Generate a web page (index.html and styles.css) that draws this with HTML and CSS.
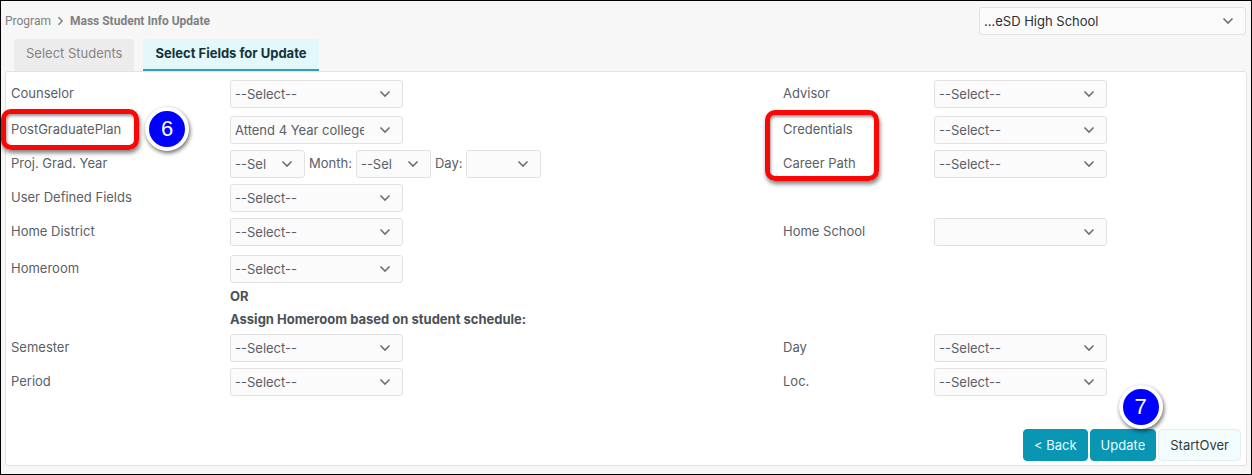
FILE: index.html
```html
<!DOCTYPE html>
<html lang="en">
<head>
<meta charset="utf-8">
<title>Mass Student Info Update</title>
<link rel="stylesheet" href="styles.css">
</head>
<body>
<svg class="sprite" aria-hidden="true">
  <symbol id="chevron" viewBox="0 0 12 8"><path d="M1.5 1.5 6 6l4.500-4.500" fill="none" stroke="currentColor" stroke-width="1.600"/></symbol>
</svg>
<div class="page">
  <header class="topbar">
    <nav class="crumbs" aria-label="Breadcrumb">
      <span>Program</span>
      <svg class="crumb-arrow" viewBox="0 0 8 12" aria-hidden="true"><path d="M1.500 1.500 6 6l-4.500 4.500" fill="none" stroke="currentColor" stroke-width="1.800"/></svg>
      <strong>Mass Student Info Update</strong>
    </nav>
    <span class="picker picker-school"><select aria-label="School"><option>...eSD High School</option></select><svg class="chevron"><use href="#chevron"/></svg></span>
  </header>
  <div class="tabs" role="tablist">
    <button class="tab" role="tab" aria-selected="false">Select Students</button>
    <button class="tab tab-active" role="tab" aria-selected="true">Select Fields for Update</button>
  </div>
  <form class="panel">
    <div class="row row-loose">
      <label for="counselor">Counselor</label>
      <span class="picker"><select id="counselor"><option>--Select--</option></select><svg class="chevron"><use href="#chevron"/></svg></span>
      <label for="advisor">Advisor</label>
      <span class="picker"><select id="advisor"><option>--Select--</option></select><svg class="chevron"><use href="#chevron"/></svg></span>
    </div>
    <div class="row">
      <div class="marked">
        <label for="plan">PostGraduatePlan</label>
        <span class="outline outline-plan"></span>
        <span class="step step-plan">6</span>
      </div>
      <span class="picker"><select id="plan"><option>Attend 4 Year college</option></select><svg class="chevron"><use href="#chevron"/></svg></span>
      <div class="marked">
        <label for="credentials">Credentials</label>
        <span class="outline outline-career"></span>
      </div>
      <span class="picker"><select id="credentials"><option>--Select--</option></select><svg class="chevron"><use href="#chevron"/></svg></span>
    </div>
    <div class="row">
      <label for="year">Proj. Grad. Year</label>
      <div class="dates">
        <span class="picker picker-small"><select id="year"><option>--Select--</option></select><svg class="chevron"><use href="#chevron"/></svg></span>
        <label for="month">Month:</label>
        <span class="picker picker-small"><select id="month"><option>--Select--</option></select><svg class="chevron"><use href="#chevron"/></svg></span>
        <label for="gradday">Day:</label>
        <span class="picker picker-small"><select id="gradday"><option></option></select><svg class="chevron"><use href="#chevron"/></svg></span>
      </div>
      <label for="career">Career Path</label>
      <span class="picker"><select id="career"><option>--Select--</option></select><svg class="chevron"><use href="#chevron"/></svg></span>
    </div>
    <div class="row">
      <label for="userfields">User Defined Fields</label>
      <span class="picker"><select id="userfields"><option>--Select--</option></select><svg class="chevron"><use href="#chevron"/></svg></span>
    </div>
    <div class="row row-section">
      <label for="district">Home District</label>
      <span class="picker"><select id="district"><option>--Select--</option></select><svg class="chevron"><use href="#chevron"/></svg></span>
      <label for="school">Home School</label>
      <span class="picker"><select id="school"><option></option></select><svg class="chevron"><use href="#chevron"/></svg></span>
    </div>
    <div class="row row-tight">
      <label for="homeroom">Homeroom</label>
      <span class="picker"><select id="homeroom"><option>--Select--</option></select><svg class="chevron"><use href="#chevron"/></svg></span>
    </div>
    <div class="row row-note"><strong>OR</strong></div>
    <div class="row row-note"><strong>Assign Homeroom based on student schedule:</strong></div>
    <div class="row row-after-note">
      <label for="semester">Semester</label>
      <span class="picker"><select id="semester"><option>--Select--</option></select><svg class="chevron"><use href="#chevron"/></svg></span>
      <label for="day">Day</label>
      <span class="picker"><select id="day"><option>--Select--</option></select><svg class="chevron"><use href="#chevron"/></svg></span>
    </div>
    <div class="row">
      <label for="period">Period</label>
      <span class="picker"><select id="period"><option>--Select--</option></select><svg class="chevron"><use href="#chevron"/></svg></span>
      <label for="loc">Loc.</label>
      <span class="picker"><select id="loc"><option>--Select--</option></select><svg class="chevron"><use href="#chevron"/></svg></span>
    </div>
    <div class="actions">
      <button type="button" class="btn">&lt; Back</button>
      <div class="marked">
        <button type="button" class="btn">Update</button>
        <span class="step step-update">7</span>
      </div>
      <button type="button" class="btn btn-light">StartOver</button>
    </div>
  </form>
</div>
</body>
</html>
```
FILE: styles.css
```css
* { box-sizing: border-box; }

body {
  margin: 0;
  font: 13px/26px Inter, "Liberation Sans", sans-serif;
  color: #5a6066;
}

button, select { font: inherit; }

.sprite { display: none; }

.page {
  display: flex;
  flex-direction: column;
  min-height: 100vh;
  padding: 6px 4px 8px;
  border: 1px solid #000;
  background: #f7f7f7;
}

.topbar {
  display: flex;
  justify-content: space-between;
  height: 32px;
}

.crumbs {
  display: flex;
  align-items: center;
  gap: 6px;
  height: 28px;
  font-family: Roboto, Inter, sans-serif;
  font-size: 12px;
  color: #808080;
}

.crumbs strong { font-weight: 700; }

.crumb-arrow { width: 7px; height: 10px; }

.picker {
  position: relative;
  display: block;
  width: 173px;
  height: 28px;
}

.picker select {
  appearance: none;
  display: block;
  width: 100%;
  height: 28px;
  padding: 0 38px 4px 4px;
  border: 1px solid #e2e2e2;
  border-radius: 3px;
  background: #fbfbfb;
  color: #5a6066;
}

.chevron {
  position: absolute;
  top: 10px;
  right: 12px;
  width: 12px;
  height: 8px;
  color: #6b7076;
  pointer-events: none;
}

.picker-school { width: 267px; margin-right: 1px; }
.picker-school select { color: #2b2f33; }

.picker-small { width: 75px; }

.tabs {
  display: flex;
  gap: 9px;
  padding-left: 9px;
}

.tab {
  height: 32px;
  padding: 0 12px 4px;
  border: 0;
  border-radius: 3px 3px 0 0;
  background: #ececec;
  color: #858585;
}

.tab-active {
  padding-bottom: 2px;
  border-bottom: 2px solid #2f9fb3;
  background: #e4f7fa;
  color: #12343b;
  font-weight: 700;
}

.panel {
  display: flex;
  flex-direction: column;
  flex: 1;
  padding: 8px 5px 4px;
  border: 1px solid #e3e3e3;
  border-radius: 3px;
  background: #fff;
}

.row {
  display: grid;
  grid-template-columns: 219fr 553fr 151fr 307fr;
  align-items: start;
  padding-bottom: 6px;
}

.row-loose { padding-bottom: 8px; }
.row-section { padding-bottom: 9px; }
.row-tight { padding-bottom: 2px; }
.row-after-note { padding-top: 3px; }

.row-note { padding-bottom: 0; line-height: 23px; color: #4b5157; }
.row-note strong { grid-column: 2 / -1; font-weight: 700; }

.dates { display: flex; gap: 4px; }

.marked { position: relative; }

.outline {
  position: absolute;
  border: 5px solid #f90606;
  border-radius: 10px;
  box-shadow: 1px 3px 4px rgba(0, 0, 0, .5), inset 1px 2px 3px rgba(0, 0, 0, .4);
  pointer-events: none;
}

.outline-plan { top: -7px; left: -10px; width: 138px; height: 41px; }
.outline-career { top: -6px; left: -18px; width: 114px; height: 71px; }

.step {
  position: absolute;
  width: 44px;
  height: 44px;
  border: 4px solid #fff;
  border-radius: 50%;
  background: #00f;
  box-shadow: 1px 2px 4px rgba(0, 0, 0, .6);
  color: #fff;
  font: 22px/36px "Liberation Sans", sans-serif;
  text-align: center;
}

.step-plan { top: -9px; left: 134px; }
.step-update { top: -44px; left: 29px; }

.actions {
  display: flex;
  justify-content: flex-end;
  gap: 2px;
  margin-top: auto;
}

.btn {
  display: block;
  height: 32px;
  padding: 0 10px;
  border: 1px solid #0996b3;
  border-radius: 4px;
  background: #0996b3;
  color: #e6fbff;
}

.btn-light {
  padding: 0 11px;
  border-color: #e3eff0;
  background: #f3fcfd;
  color: #33383c;
}
```
